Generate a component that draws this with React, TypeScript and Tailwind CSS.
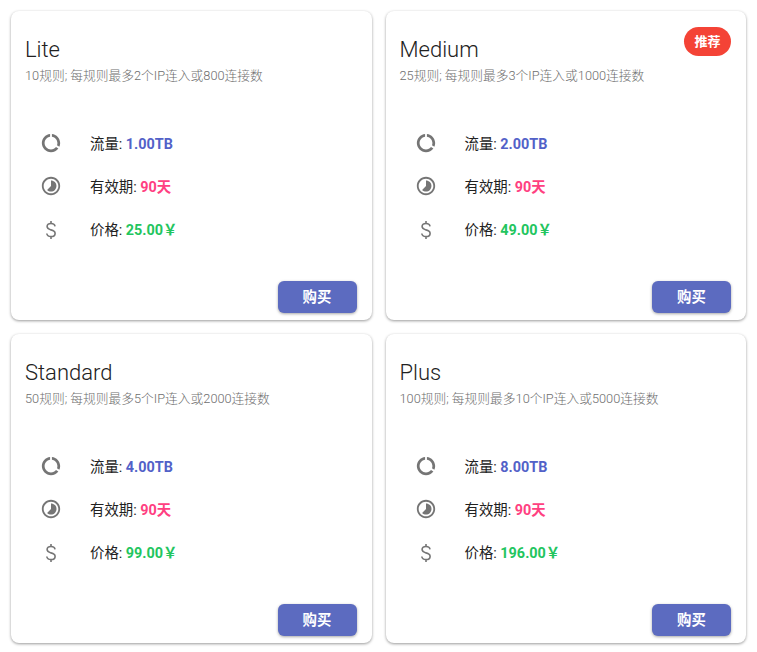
const plans = [
  { name: "Lite", desc: "10规则; 每规则最多2个IP连入或800连接数", traffic: "1.00TB", price: "25.00" },
  { name: "Medium", desc: "25规则; 每规则最多3个IP连入或1000连接数", traffic: "2.00TB", price: "49.00", badge: true },
  { name: "Standard", desc: "50规则; 每规则最多5个IP连入或2000连接数", traffic: "4.00TB", price: "99.00" },
  { name: "Plus", desc: "100规则; 每规则最多10个IP连入或5000连接数", traffic: "8.00TB", price: "196.00" },
];

const RingIcon = () => (
  <svg width="22" height="22" viewBox="0 0 24 24" fill="#757575">
    <path d="M13 2.05v3.03c3.39.49 6 3.39 6 6.92 0 .9-.18 1.75-.48 2.54l2.6 1.53c.56-1.24.88-2.62.88-4.07 0-5.18-3.95-9.45-9-9.95zM12 19c-3.87 0-7-3.13-7-7 0-3.53 2.61-6.43 6-6.92V2.05c-5.06.5-9 4.76-9 9.95 0 5.52 4.47 10 9.99 10 3.31 0 6.24-1.61 8.06-4.09l-2.6-1.53C16.17 17.98 14.21 19 12 19z" />
  </svg>
);

const ClockIcon = () => (
  <svg width="22" height="22" viewBox="0 0 24 24" fill="#757575">
    <path d="M16.24 7.76C15.07 6.59 13.54 6 12 6v6l-4.24 4.24c2.34 2.34 6.14 2.34 8.49 0 2.34-2.34 2.34-6.14-.01-8.48zM12 2C6.48 2 2 6.48 2 12s4.48 10 10 10 10-4.48 10-10S17.52 2 12 2zm0 18c-4.42 0-8-3.58-8-8s3.58-8 8-8 8 3.58 8 8-3.58 8-8 8z" />
  </svg>
);

const DollarIcon = () => (
  <svg className="-ml-[1px] mt-[2px]" width="24" height="24" viewBox="0 0 24 24" fill="none" stroke="#757575" strokeWidth="1.6">
    <path d="M16 8.400C15.800 6.600 14.200 5.500 12 5.500c-2.400 0-3.900 1.300-3.900 3.100 0 2 1.700 2.700 3.900 3.300 2.500.6 4.100 1.400 4.100 3.500 0 1.900-1.700 3.100-4.100 3.100-2.400 0-4-1.200-4.200-3" />
    <path d="M12 3v2.500M12 18.500V21" />
  </svg>
);

function Row({ icon, label, children }: { icon: React.ReactNode; label: string; children: React.ReactNode }) {
  return (
    <div className="flex h-[43px] items-center pl-[15px]">
      <div className="mb-[1px] flex w-[50px] shrink-0">{icon}</div>
      <div className="mt-[2px] text-[14.4px] text-[#212121]">
        {label}: {children}
      </div>
    </div>
  );
}

function Card({ plan }: { plan: (typeof plans)[number] }) {
  return (
    <div className="relative flex h-[309px] flex-col rounded-lg bg-white pl-[14px] pr-[15px] shadow-[0_1px_3px_rgba(0,0,0,0.4)]">
      {plan.badge && (
        <span className="absolute right-[15px] top-[16px] flex h-[29px] w-[47px] items-center justify-center rounded-full bg-[#f44336] text-[13px] font-bold text-white">
          推荐
        </span>
      )}
      <h2 className="mt-[25px] text-[22px] font-light leading-[28px] text-[#212121]">{plan.name}</h2>
      <p className="mt-[3px] text-[12.75px] font-light leading-[18px] text-[#6e6e6e]">{plan.desc}</p>
      <div className="mt-[37px] flex flex-col">
        <Row icon={<RingIcon />} label="流量">
          <b className="text-[#5261c8]">{plan.traffic}</b>
        </Row>
        <Row icon={<ClockIcon />} label="有效期">
          <b className="text-[#ff4081]">90天</b>
        </Row>
        <Row icon={<DollarIcon />} label="价格">
          <b className="text-[#22c55e]">{plan.price}￥</b>
        </Row>
      </div>
      <div className="mt-auto mb-[7px] flex justify-end">
        <button className="h-[32px] w-[79px] rounded-md bg-[#5c6bc0] pt-[1px] text-[14.4px] font-bold text-white shadow-[0_1px_3px_rgba(0,0,0,0.35)]">
          购买
        </button>
      </div>
    </div>
  );
}

export default function App() {
  return (
    <div className="min-h-[652px] bg-white px-[11px] py-[11px] font-['Roboto','Noto_Sans_CJK_SC',sans-serif]">
      <div className="grid grid-cols-2 gap-x-[14px] gap-y-[14px]">
        {plans.map((p) => (
          <Card key={p.name} plan={p} />
        ))}
      </div>
    </div>
  );
}
